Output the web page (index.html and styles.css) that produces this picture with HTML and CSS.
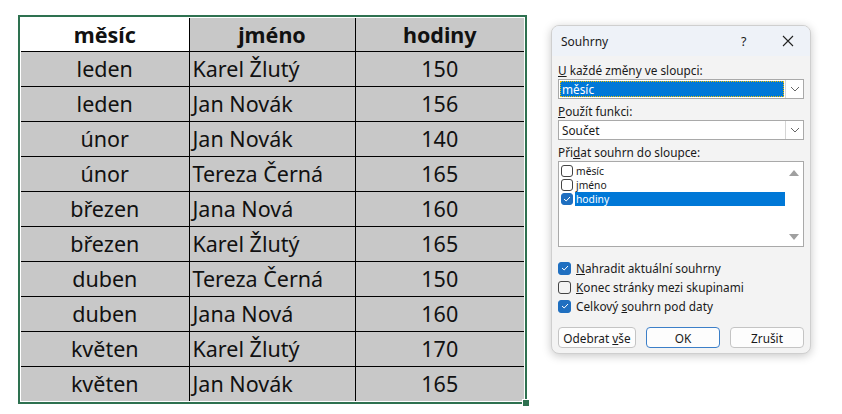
FILE: index.html
```html
<!DOCTYPE html>
<html>
<head>
<meta charset="utf-8">
<link rel="stylesheet" href="styles.css">
</head>
<body>
<div class="page">
  <div class="sheet">
    <table class="grid">
      <colgroup><col class="c1"><col class="c2"><col class="c3"></colgroup>
      <thead>
        <tr><th class="white">měsíc</th><th>jméno</th><th>hodiny</th></tr>
      </thead>
      <tbody>
        <tr><td>leden</td><td class="left">Karel Žlutý</td><td>150</td></tr>
        <tr><td>leden</td><td class="left">Jan Novák</td><td>156</td></tr>
        <tr><td>únor</td><td class="left">Jan Novák</td><td>140</td></tr>
        <tr><td>únor</td><td class="left">Tereza Černá</td><td>165</td></tr>
        <tr><td>březen</td><td class="left">Jana Nová</td><td>160</td></tr>
        <tr><td>březen</td><td class="left">Karel Žlutý</td><td>165</td></tr>
        <tr><td>duben</td><td class="left">Tereza Černá</td><td>150</td></tr>
        <tr><td>duben</td><td class="left">Jana Nová</td><td>160</td></tr>
        <tr><td>květen</td><td class="left">Karel Žlutý</td><td>170</td></tr>
        <tr><td>květen</td><td class="left">Jan Novák</td><td>165</td></tr>
      </tbody>
    </table>
    <span class="handle"></span>
  </div>

  <div class="dialog">
    <div class="titlebar">
      <span class="title">Souhrny</span>
      <span class="help">?</span>
      <svg class="close" width="12" height="12" viewBox="0 0 12 12"><path d="M1 1L11 11M11 1L1 11" stroke="#222" stroke-width="1.1" fill="none"/></svg>
    </div>
    <div class="body">
      <div class="label first"><u>U</u> každé změny ve sloupci:</div>
      <div class="select">
        <div class="value"><span class="sel">měsíc</span></div>
        <div class="arrow"><svg width="10" height="6" viewBox="0 0 10 6"><path d="M1 1L5 5L9 1" stroke="#666" stroke-width="1" fill="none"/></svg></div>
      </div>
      <div class="label"><u>P</u>oužít funkci:</div>
      <div class="select">
        <div class="value"><span class="plain">Součet</span></div>
        <div class="arrow"><svg width="10" height="6" viewBox="0 0 10 6"><path d="M1 1L5 5L9 1" stroke="#666" stroke-width="1" fill="none"/></svg></div>
      </div>
      <div class="label">Při<u>d</u>at souhrn do sloupce:</div>
      <div class="listbox">
        <div class="items">
          <div class="item"><span class="box"></span><span class="txt">měsíc</span></div>
          <div class="item"><span class="box"></span><span class="txt">jméno</span></div>
          <div class="item active"><span class="box on"><svg width="10" height="8" viewBox="0 0 10 8"><path d="M2 4L4.2 6L8 2" stroke="#fff" stroke-width="1" fill="none"/></svg></span><span class="txt">hodiny</span></div>
        </div>
        <div class="scroll">
          <svg width="10" height="6" viewBox="0 0 10 6"><path d="M0 6L5 0L10 6Z" fill="#a0a0a0"/></svg>
          <svg width="10" height="6" viewBox="0 0 10 6"><path d="M0 0L5 6L10 0Z" fill="#a0a0a0"/></svg>
        </div>
      </div>
      <div class="checks">
        <div class="check"><span class="cb on"><svg width="10" height="8" viewBox="0 0 10 8"><path d="M2 4L4.2 6L8 2" stroke="#fff" stroke-width="1" fill="none"/></svg></span><span><u>N</u>ahradit aktuální souhrny</span></div>
        <div class="check"><span class="cb"></span><span><u>K</u>onec stránky mezi skupinami</span></div>
        <div class="check"><span class="cb on"><svg width="10" height="8" viewBox="0 0 10 8"><path d="M2 4L4.2 6L8 2" stroke="#fff" stroke-width="1" fill="none"/></svg></span><span>Celkový <u>s</u>ouhrn pod daty</span></div>
      </div>
      <div class="buttons">
        <div class="btn"><span>Odebrat <u>v</u>še</span></div>
        <div class="btn primary"><span>OK</span></div>
        <div class="btn"><span>Zrušit</span></div>
      </div>
    </div>
  </div>
</div>
</body>
</html>
```

FILE: styles.css
```css
html, body {
  margin: 0;
  padding: 0;
  background: #ffffff;
}
.page {
  display: flex;
  align-items: flex-start;
  padding: 15px 0 0 18px;
  width: 842px;
  height: 414px;
  box-sizing: border-box;
}
.sheet {
  position: relative;
  border: 2px solid #2e7150;
  padding: 1px;
  background: #fff;
}
.grid {
  border-collapse: collapse;
  table-layout: fixed;
  width: 503px;
  font-family: "Noto Sans", "Open Sans", sans-serif;
  font-size: 21.5px;
  color: #111;
}
.c1 { width: 168px; }
.c2 { width: 166px; }
.c3 { width: 169px; }
.grid th, .grid td {
  padding: 0;
  text-align: center;
  background: #c8c8c8;
  line-height: 22px;
}
.grid th {
  height: 33px;
  font-weight: 700;
  border-left: 1px solid #000;
  border-bottom: 1px solid #000;
}
.grid th:first-child { border-left: none; }
.grid th.white { background: #ffffff; }
.grid td {
  height: 34px;
  border-left: 1px solid #000;
  border-top: 1px solid #000;
}
.grid td:first-child { border-left: none; }
.grid tbody tr:first-child td { border-top: none; }
.grid td.left {
  text-align: left;
  padding-left: 3px;
}
.handle {
  position: absolute;
  right: -5px;
  bottom: -5px;
  width: 6px;
  height: 6px;
  background: #2e7150;
  border: 1px solid #fff;
}

.dialog {
  margin-left: 24px;
  margin-top: 10px;
  width: 260px;
  height: 329px;
  background: #f3f3f3;
  border: 1px solid #cfcfcf;
  border-radius: 8px;
  box-shadow: 0 2px 10px rgba(0,0,0,0.22);
  overflow: hidden;
  font-family: "Noto Sans", "Open Sans", sans-serif;
  font-size: 11.8px;
  color: #1a1a1a;
  box-sizing: border-box;
}
.titlebar {
  height: 30px;
  background: #eef2f8;
  display: flex;
  align-items: center;
  padding: 0 0 0 9px;
}
.title {
  font-size: 12px;
  flex: 1;
}
.help {
  font-size: 12.5px;
  width: 20px;
  margin-right: 21px;
}
.close {
  margin-right: 16px;
}
.body {
  padding: 0 6px 0 6px;
}
.label {
  line-height: 16px;
  height: 17px;
  padding-top: 4px;
  box-sizing: content-box;
}
.label.first { padding-top: 6px; }
.select {
  display: flex;
  height: 20px;
  border: 1px solid #a9a9a9;
  background: #fff;
  box-sizing: border-box;
}
.value {
  flex: 1;
  display: flex;
  padding: 1px;
}
.sel {
  flex: 1;
  background: #0078d7;
  color: #fff;
  border: 1px dotted #f0c000;
  line-height: 14px;
  padding-left: 1px;
}
.plain {
  padding-left: 2px;
  line-height: 17px;
}
.arrow {
  width: 17px;
  border-left: 1px solid #d5d5d5;
  display: flex;
  align-items: center;
  justify-content: center;
}
.listbox {
  height: 86px;
  border: 1px solid #a9a9a9;
  background: #fff;
  display: flex;
  box-sizing: border-box;
}
.items {
  flex: 1;
  padding: 2px 0 0 2px;
}
.item {
  display: flex;
  align-items: center;
  height: 14px;
  overflow: hidden;
}
.box {
  width: 12px;
  height: 12px;
  border: 1px solid #444;
  border-radius: 3px;
  box-sizing: border-box;
  margin-right: 2px;
  display: flex;
  align-items: center;
  justify-content: center;
  background: #fff;
}
.box.on {
  background: #1f6fc0;
  border-color: #1f6fc0;
}
.txt {
  flex: 1;
  font-size: 10.3px;
  line-height: 14px;
  height: 14px;
  padding-left: 1px;
}
.item.active .txt {
  background: #0078d7;
  color: #fff;
}
.scroll {
  width: 18px;
  display: flex;
  flex-direction: column;
  align-items: center;
  justify-content: space-between;
  padding: 8px 0 6px 0;
}
.checks {
  padding-top: 14px;
  display: flex;
  flex-direction: column;
  gap: 5px;
}
.check {
  display: flex;
  align-items: center;
  height: 14px;
}
.cb {
  width: 13px;
  height: 13px;
  border: 1px solid #444;
  border-radius: 3px;
  box-sizing: border-box;
  margin-right: 5px;
  display: flex;
  align-items: center;
  justify-content: center;
}
.cb.on {
  background: #1f6fc0;
  border-color: #1f6fc0;
}
.buttons {
  display: flex;
  justify-content: space-between;
  padding-top: 14px;
}
.btn {
  width: 78px;
  height: 21px;
  border: 1px solid #c4c4c4;
  border-radius: 4px;
  background: #fdfdfd;
  display: flex;
  align-items: center;
  justify-content: center;
  box-sizing: border-box;
}
.btn:nth-child(2), .btn:nth-child(3) { width: 74px; }
.btn.primary {
  border: 1px solid #3c7fc8;
}
```
